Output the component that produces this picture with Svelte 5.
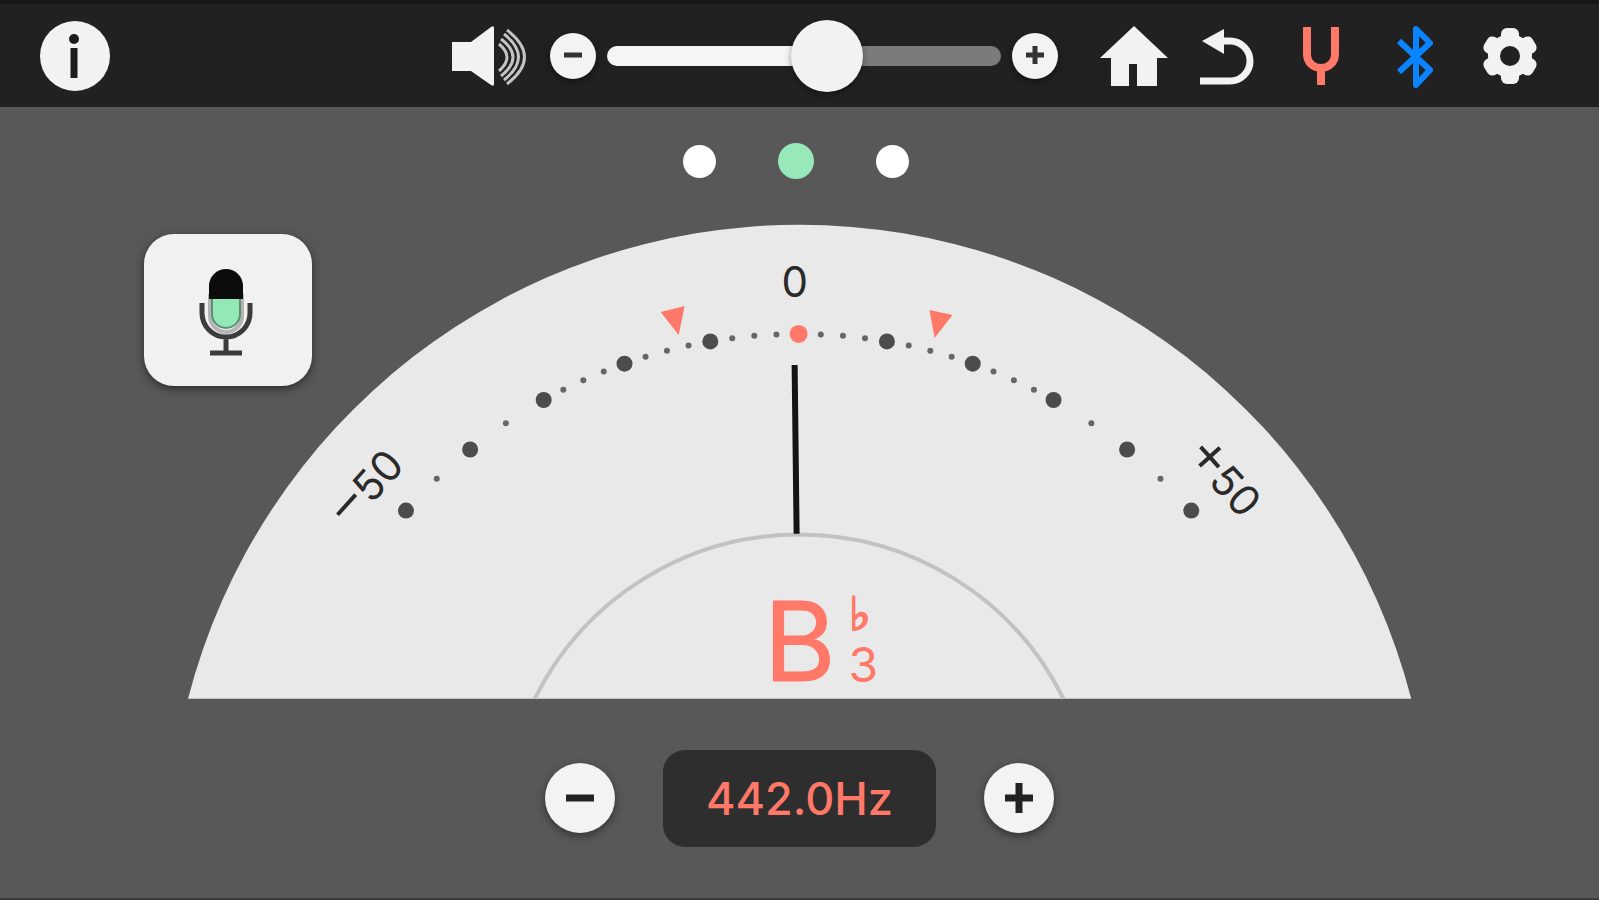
<script>
  let volume = $state(57);
  let pitch = $state(442);

  const STEP = 9.69;
  const RADIUS = 525;
  const CX = 611;
  const CY = 634;

  // Scale marks in tens of cents: quarter steps near the middle, half steps outside.
  const positions = [-5, -4.5, -4, -3.5];
  for (let i = -12; i <= 12; i++) positions.push(i / 4);
  positions.push(3.5, 4, 4.5, 5);

  const marks = positions.map((p) => {
    const a = (p * STEP * Math.PI) / 180;
    return {
      x: CX + RADIUS * Math.sin(a),
      y: CY - RADIUS * Math.cos(a),
      major: Number.isInteger(p),
      zero: p === 0
    };
  });
</script>

<div class="app">
  <header>
    <button class="icon" aria-label="Information">
      <svg viewBox="0 0 72 72" width="72" height="72">
        <circle cx="36" cy="36" r="35" fill="#f2f2f2" />
        <circle cx="35" cy="19" r="5" fill="#1c1c1c" />
        <path d="M35 28V58" stroke="#1c1c1c" stroke-width="7" />
      </svg>
    </button>

    <div class="tools">
      <div class="volume">
        <svg class="speaker" viewBox="0 0 76 72" width="76" height="72" aria-hidden="true">
          <path d="M0 22H19L39 7Q42 5 42 8V64Q42 67 39 65L19 51H0Z" fill="#f2f2f2" />
          <g fill="none" stroke="#c4c4c4" stroke-width="3">
            <path d="M47 24Q63 37 47 51" />
            <path d="M49 19Q73 37 49 56" />
            <path d="M52 14Q81 37 52 60" />
            <path d="M55 10Q90 37 55 64" />
          </g>
        </svg>
        <button class="round small" aria-label="Volume down" onclick={() => (volume = Math.max(0, volume - 5))}>
          <svg viewBox="0 0 46 46" width="46" height="46"><path d="M14 22H32" stroke="#333" stroke-width="5" /></svg>
        </button>
        <input
          type="range"
          aria-label="Volume"
          min="0"
          max="100"
          bind:value={volume}
          style="--level: {volume}%"
        />
        <button class="round small" aria-label="Volume up" onclick={() => (volume = Math.min(100, volume + 5))}>
          <svg viewBox="0 0 46 46" width="46" height="46"><path d="M14 22H32M23 13V31" stroke="#333" stroke-width="5" /></svg>
        </button>
      </div>

      <nav>
        <button class="icon" aria-label="Home">
          <svg viewBox="0 0 72 72" width="72" height="72">
            <path d="M36 6L70 38H59V66H39V44H31V66H13V38H2Z" fill="#f2f2f2" />
          </svg>
        </button>
        <button class="icon" aria-label="Back">
          <svg viewBox="0 0 72 72" width="72" height="72">
            <path d="M8 61H38A20 20 0 0 0 38 21H30" fill="none" stroke="#f2f2f2" stroke-width="7" />
            <path d="M10 21L32 9V34Z" fill="#f2f2f2" />
          </svg>
        </button>
        <button class="icon" aria-label="Tuner">
          <svg viewBox="0 0 72 72" width="72" height="72">
            <path d="M21 7V34C21 43 28 48 35 48S49 43 49 34V7M35 48V65" fill="none" stroke="#ff7868" stroke-width="8" />
          </svg>
        </button>
        <button class="icon" aria-label="Bluetooth">
          <svg viewBox="0 0 72 72" width="72" height="72">
            <path d="M19 21L50 50L36 65V9L50 23L19 52" fill="none" stroke="#0a84ff" stroke-width="6" stroke-linejoin="round" />
          </svg>
        </button>
        <button class="icon" aria-label="Settings">
          <svg viewBox="0 0 72 72" width="72" height="72">
            <circle cx="36" cy="36" r="22" fill="#f2f2f2" />
            <g fill="#f2f2f2">
              <rect x="27" y="8" width="18" height="56" rx="6" />
              <rect x="27" y="8" width="18" height="56" rx="6" transform="rotate(60 36 36)" />
              <rect x="27" y="8" width="18" height="56" rx="6" transform="rotate(120 36 36)" />
            </g>
            <circle cx="36" cy="36" r="10" fill="#212121" />
          </svg>
        </button>
      </nav>
    </div>
  </header>

  <main>
    <div class="lamps">
      <span class="lamp"></span>
      <span class="lamp on"></span>
      <span class="lamp"></span>
    </div>

    <div class="stage">
      <svg class="gauge" viewBox="0 0 1224 474" role="img" aria-label="Tuning meter">
        <path d="M0 474A632 632 0 0 1 1224 474Z" fill="#e9e9e9" />
        <path d="M347 474A295 295 0 0 1 876 474" fill="none" stroke="#c2c2c2" stroke-width="4" />
        {#each marks as m}
          <circle
            cx={m.x}
            cy={m.y}
            r={m.zero ? 9 : m.major ? 8 : 3}
            fill={m.zero ? '#ff7868' : m.major ? '#4c4c4c' : '#666'}
          />
        {/each}
        <path d="M473 87L497 81L491 110ZM742 85L765 90L747 113Z" fill="#ff7868" />
        <path d="M607 140L609 309" stroke="#141414" stroke-width="6" />
        <g class="labels">
          <text x="607" y="72">0</text>
          <text transform="translate(190 273) rotate(-48)"><tspan class="sign">−</tspan>50</text>
          <text transform="translate(1026 264) rotate(48)"><tspan class="sign">+</tspan>50</text>
        </g>
        <g class="note">
          <text class="name" x="576" y="456">B</text>
          <text class="flat" x="661" y="405">♭</text>
          <text class="octave" x="661" y="457">3</text>
        </g>
      </svg>

      <button class="mic" aria-label="Microphone">
        <svg viewBox="0 0 60 92" width="60" height="92">
          <path d="M14 32V52A16 16 0 0 0 46 52V32Z" fill="none" stroke="#b4b4b4" stroke-width="4" />
          <path d="M16 34H44V50A14 14 0 0 1 16 50Z" fill="#92e8b6" stroke="#5b8f70" stroke-width="2" />
          <path d="M13 35V22A17 17 0 0 1 47 22V35Z" fill="#0c0c0c" />
          <path d="M6 39V49A24 24 0 0 0 54 49V39M30 73V88M14 89H46" fill="none" stroke="#3c3c3c" stroke-width="5" />
        </svg>
      </button>
    </div>

    <div class="pitch">
      <button class="round" aria-label="Lower pitch" onclick={() => (pitch -= 0.5)}>
        <svg viewBox="0 0 70 70" width="70" height="70"><path d="M21 35H49" stroke="#222" stroke-width="7" /></svg>
      </button>
      <output>{pitch.toFixed(1)}Hz</output>
      <button class="round" aria-label="Raise pitch" onclick={() => (pitch += 0.5)}>
        <svg viewBox="0 0 70 70" width="70" height="70"><path d="M21 35H49M35 20V50" stroke="#222" stroke-width="7" /></svg>
      </button>
    </div>
  </main>
</div>

<style>
  :global(body) {
    background: #585858;
  }

  .app {
    min-height: 100vh;
    box-sizing: border-box;
    display: flex;
    flex-direction: column;
    border-bottom: 3px solid #3a3a3a;
    background: #585858;
    font-family: Inter, 'Liberation Sans', sans-serif;
  }

  button {
    padding: 0;
    border: 0;
    background: none;
    cursor: pointer;
  }

  svg {
    display: block;
  }

  header {
    display: flex;
    justify-content: space-between;
    align-items: center;
    padding: 16px 53px 15px 39px;
    border-top: 4px solid #171717;
    background: #212121;
  }

  .tools {
    display: flex;
    align-items: center;
    gap: 40px;
  }

  .volume {
    display: flex;
    align-items: center;
  }

  .speaker {
    margin-right: 22px;
  }

  nav {
    display: flex;
    gap: 22px;
  }

  .round {
    border-radius: 50%;
    background: #f3f3f3;
    box-shadow: 0 3px 8px rgb(0 0 0 / 45%);
  }

  input {
    appearance: none;
    flex: 0 1 394px;
    width: 394px;
    height: 72px;
    margin: 0 11px;
    background: none;
  }

  input::-webkit-slider-runnable-track {
    height: 20px;
    border-radius: 10px;
    background: linear-gradient(to right, #f5f5f5 var(--level), #7b7b7b var(--level));
  }

  input::-webkit-slider-thumb {
    appearance: none;
    width: 72px;
    height: 72px;
    margin-top: -26px;
    border-radius: 50%;
    background: #f2f2f2;
    box-shadow: 0 2px 6px rgb(0 0 0 / 40%);
  }

  main {
    flex: 1;
    display: flex;
    flex-direction: column;
    padding-top: 36px;
  }

  .lamps {
    display: flex;
    justify-content: center;
    align-items: center;
    gap: 62px;
    padding-right: 8px;
  }

  .lamp {
    width: 33px;
    height: 33px;
    border-radius: 50%;
    background: #fff;
  }

  .lamp.on {
    width: 36px;
    height: 36px;
    background: #98e9ba;
  }

  .stage {
    display: grid;
    margin-top: 46px;
  }

  .gauge,
  .mic {
    grid-area: 1 / 1;
  }

  .gauge {
    width: 76.5%;
    justify-self: center;
    overflow: visible;
  }

  .labels {
    fill: #2a2a2a;
    font-size: 42px;
    text-anchor: middle;
  }

  .sign {
    font-family: 'Liberation Sans', sans-serif;
    font-size: 56px;
  }

  .note {
    fill: #ff7868;
  }

  .name {
    font-size: 110px;
    stroke: #ff7868;
    stroke-width: 1px;
  }

  .flat {
    font-size: 46px;
    stroke: #ff7868;
    stroke-width: 2px;
  }

  .octave {
    font-size: 48px;
  }

  .mic {
    justify-self: start;
    align-self: start;
    display: grid;
    place-items: center;
    width: 168px;
    height: 152px;
    margin: 9px 0 0 9%;
    padding-right: 4px;
    border-radius: 30px;
    background: #f1f1f1;
    box-shadow: 0 3px 10px rgb(0 0 0 / 50%);
  }

  .pitch {
    display: flex;
    justify-content: center;
    align-items: center;
    gap: 48px;
    padding: 51px 0;
  }

  output {
    padding: 0 43px;
    border-radius: 22px;
    background: #2e2e2e;
    color: #ff7868;
    font-size: 45px;
    font-weight: 500;
    line-height: 97px;
  }
</style>
